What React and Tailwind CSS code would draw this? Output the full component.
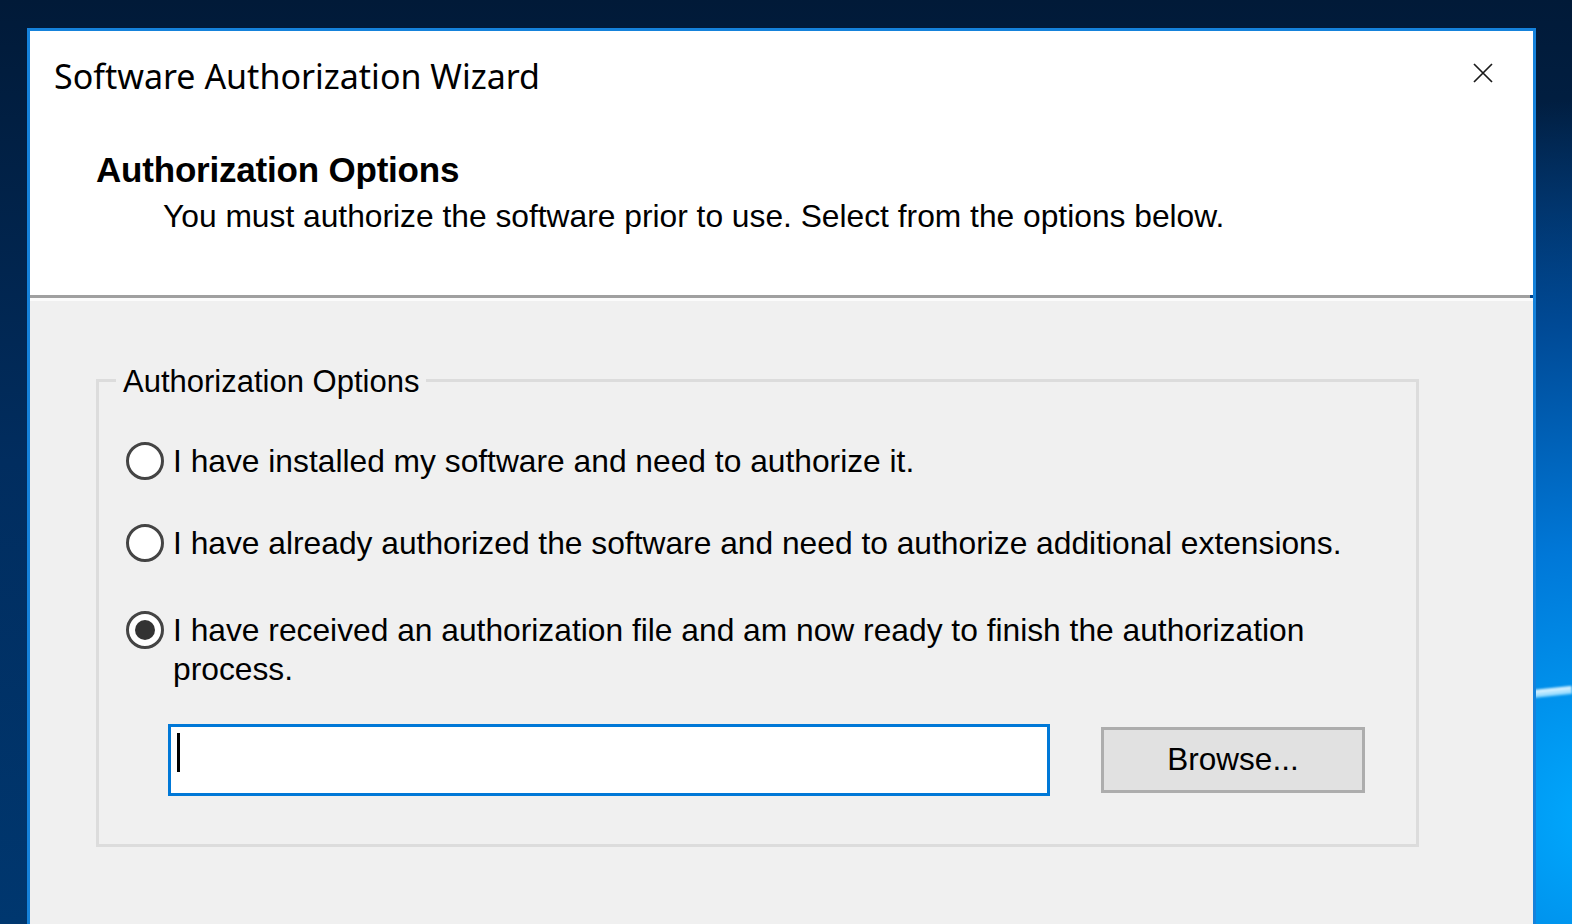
import React from 'react';

const sans = { fontFamily: '"Liberation Sans", Arial, sans-serif' };

function Radio({ checked }) {
  return (
    <span className="flex h-[38px] w-[38px] shrink-0 items-center justify-center rounded-full border-[3px] border-[#444] bg-white">
      {checked && <span className="h-[20px] w-[20px] rounded-full bg-[#333]" />}
    </span>
  );
}

function Option({ checked, children, className = '' }) {
  return (
    <div className={`flex items-start gap-[9px] ${className}`}>
      <Radio checked={checked} />
      <span className="max-w-[1200px] text-[31.75px] leading-[39px] text-black">{children}</span>
    </div>
  );
}

export default function App() {
  return (
    <div
      className="relative h-[924px] w-[1572px] overflow-hidden bg-[radial-gradient(ellipse_900px_900px_at_1600px_820px,#00aaff_0%,#0078d8_30%,#004a96_55%,transparent_80%),linear-gradient(180deg,#011a38_0%,#012d5f_50%,#00376f_100%)] pl-[27px] pt-[28px]"
      style={sans}
    >
      {/* desktop light streak */}
      <div className="absolute right-0 top-[688px] h-[8px] w-[40px] -rotate-6 bg-gradient-to-b from-[#e8f8ff] to-[#7fd4ff] blur-[1px]" />

      <div className="relative flex h-[900px] w-[1509px] flex-col border-[3px] border-b-0 border-[#1582db]">
        {/* header */}
        <div className="h-[264px] shrink-0 bg-white">
          <div className="flex items-start justify-between pl-[24px] pr-[40px] pt-[25px]">
            <div className="text-[34px] leading-[40px] text-black" style={{ fontFamily: '"Noto Sans", "Open Sans", sans-serif' }}>
              Software Authorization Wizard
            </div>
            <svg className="mt-[7px]" width="20" height="20" viewBox="0 0 20 20">
              <path d="M1 1 L19 19 M19 1 L1 19" stroke="#1a1a1a" strokeWidth="1.7" fill="none" />
            </svg>
          </div>
          <div className="pl-[66px] pt-[54px]">
            <div className="text-[35px] font-bold leading-[40px] tracking-[-0.2px] text-black">Authorization Options</div>
            <div className="pl-[67px] pt-[6px] text-[31.75px] leading-[40px] text-black">
              You must authorize the software prior to use. Select from the options below.
            </div>
          </div>
        </div>
        <div className="mr-[3px] h-[3px] shrink-0 bg-[#a0a0a0]" />
        <div className="h-[3px] shrink-0 bg-[#fbfbfb]" />

        {/* body */}
        <div className="flex-1 bg-[#f0f0f0] pl-[66px] pt-[78px]">
          <div className="relative h-[468px] w-[1323px] border-[3px] border-[#dcdcdc] pl-[27px] pt-[60px]">
            <span className="absolute left-[17px] top-[-18px] bg-[#f0f0f0] px-[7px] text-[31px] leading-[36px] text-black">
              Authorization Options
            </span>
            <Option>I have installed my software and need to authorize it.</Option>
            <Option className="mt-[43px]">
              I have already authorized the software and need to authorize additional extensions.
            </Option>
            <Option checked className="mt-[48px]">
              I have received an authorization file and am now ready to finish the authorization process.
            </Option>
            <div className="ml-[42px] mt-[35px] flex items-center">
              <div className="flex h-[72px] w-[882px] shrink-0 items-start border-[3px] border-[#0078d7] bg-white pl-[6px] pt-[6px]">
                <span className="h-[39px] w-[3px] bg-black" />
              </div>
              <button className="ml-[51px] h-[66px] w-[264px] shrink-0 border-[3px] border-[#adadad] bg-[#e1e1e1] text-[31.5px] text-black">
                Browse...
              </button>
            </div>
          </div>
        </div>
      </div>
    </div>
  );
}
